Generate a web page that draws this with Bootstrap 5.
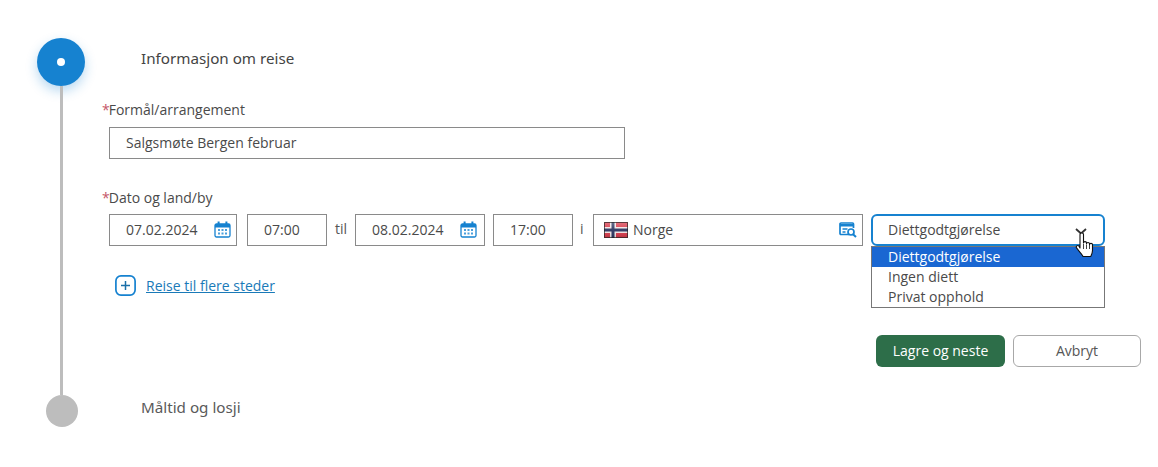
<!DOCTYPE html>
<html lang="no">
<head>
    <meta charset="UTF-8">
    <meta name="viewport" content="width=device-width, initial-scale=1.0">
    <title>Informasjon om reise</title>
    <link href="https://cdn.jsdelivr.net/npm/bootstrap@5.3.0/dist/css/bootstrap.min.css" rel="stylesheet">
    <style>
        body { font-family: "Open Sans", "Liberation Sans", sans-serif; font-size: 14px; color: #4a4a4a; background: #fff; overflow: hidden; }
        .wizard { padding: 38px 17px 0 37px; }
        .rail { width: 48px; flex: none; }
        .step-on { flex: none; width: 48px; height: 48px; border-radius: 50%; background: #1682d0; box-shadow: 0 5px 12px rgba(22,130,208,.3); }
        .step-on span { width: 8px; height: 8px; border-radius: 50%; background: #fff; }
        .rail-line { width: 3px; margin-left: 23px; background: #bdbdbd; }
        .step-off { width: 32px; height: 32px; margin-left: 9px; border-radius: 50%; background: #bdbdbd; }
        .step-title { margin: 8px 0 0 56px; height: 24px; line-height: 24px; font-size: 15.2px; color: #444; font-family: "Noto Sans", sans-serif; }
        .step-title-off { margin-top: 0; color: #5a5a5a; }
        .form-area { padding-left: 17px; }
        .field-label { display: block; margin: 30px 0 7px; height: 20px; line-height: 20px; font-size: 14px; color: #4a4a4a; }
        .field-label.next { margin-top: 29px; margin-bottom: 6px; }
        .req { color: #c4566a; margin-right: -1px; }
        .field-row { margin-left: 7px; }
        .form-control.box { height: 32px; border: 1px solid #8a8a8a; border-radius: 0; padding: 0 16px 2px; font-size: 14px; color: #4a4a4a; box-shadow: none; }
        .w-purpose { width: 516px; }
        .w-date { width: 128px; }
        .w-date2 { width: 130px; }
        .w-time { width: 80px; }
        .w-land { width: 270px; }
        .form-control.box.land { padding-left: 39px; }
        .w-diet { width: 234px; }
        .sep { color: #555; line-height: 30px; }
        .sep-til { width: 28px; padding-left: 8px; }
        .sep-i { width: 20px; padding-left: 7px; }
        .gap-wide { width: 10px; }
        .gap-narrow { width: 8px; }
        .ico-cal { position: absolute; left: 105px; top: 7px; }
        .ico-flag { position: absolute; left: 11px; top: 8px; }
        .ico-find { position: absolute; left: 246px; top: 8px; }
        .form-select.diet { height: 32px; border: 2px solid #1682d0; border-radius: 6px; padding: 0 15px 2px; font-size: 14px; color: #4a4a4a; background-image: none; box-shadow: none; }
        .dropdown-menu.diet-list { top: 32px; left: 0; width: 234px; min-width: 0; padding: 0; margin: 0; border: 1px solid #777; border-radius: 0; font-size: 14px; line-height: 20px; }
        .dropdown-menu.diet-list .dropdown-item { padding: 0 16px; height: 20px; color: #4a4a4a; }
        .dropdown-menu.diet-list .dropdown-item.active { background: #1a67d2; color: #fff; }
        .ico-hand { position: absolute; left: 204px; top: 14px; z-index: 1010; }
        .add-row { margin: 29px 0 0 13px; height: 21px; }
        .add-row a { color: #1a7ab8; font-size: 14px; margin-left: 10px; }
        .button-row { margin-top: 39px; padding-bottom: 28px; gap: 8px; }
        .btn.btn-save { width: 129px; height: 32px; padding: 0 0 2px; background: #2d6e49; border: 0; border-radius: 6px; color: #fff; font-size: 14px; font-weight: 500; }
        .btn.btn-abort { width: 128px; height: 32px; padding: 0 0 2px; background: #fff; border: 1px solid #a8a8a8; border-radius: 6px; color: #555; font-size: 14px; }
    </style>
</head>
<body>
<div class="wizard">
    <div class="d-flex">
        <div class="rail d-flex flex-column">
            <div class="step-on d-flex align-items-center justify-content-center"><span></span></div>
            <div class="rail-line flex-grow-1"></div>
        </div>
        <div class="flex-grow-1">
            <div class="step-title">Informasjon om reise</div>
            <form class="form-area">
                <label class="field-label"><span class="req">*</span>Formål/arrangement</label>
                <div class="field-row w-purpose">
                    <input type="text" class="form-control box" value="Salgsmøte Bergen februar">
                </div>

                <label class="field-label next"><span class="req">*</span>Dato og land/by</label>
                <div class="field-row d-flex">
                    <div class="w-date position-relative">
                        <input type="text" class="form-control box" value="07.02.2024">
                        <svg class="ico-cal" width="17" height="17" viewBox="0 0 17 17">
                            <rect x="1" y="3" width="15" height="13" rx="1.5" fill="#fff" stroke="#1682d0" stroke-width="1.3"/>
                            <rect x="1" y="3" width="15" height="3.5" fill="#1682d0"/>
                            <rect x="3.6" y="0.5" width="2" height="4" fill="#1682d0"/>
                            <rect x="11.4" y="0.5" width="2" height="4" fill="#1682d0"/>
                            <path d="M4 8h2v2H4zM7.5 8h2v2h-2zM11 8h2v2h-2zM4 11.5h2v2H4zM7.5 11.5h2v2h-2zM11 11.5h2v2h-2z" fill="#4a9fdc"/>
                        </svg>
                    </div>
                    <div class="gap-wide"></div>
                    <div class="w-time"><input type="text" class="form-control box" value="07:00"></div>
                    <div class="sep sep-til">til</div>
                    <div class="w-date2 position-relative">
                        <input type="text" class="form-control box" value="08.02.2024">
                        <svg class="ico-cal" width="17" height="17" viewBox="0 0 17 17">
                            <rect x="1" y="3" width="15" height="13" rx="1.5" fill="#fff" stroke="#1682d0" stroke-width="1.3"/>
                            <rect x="1" y="3" width="15" height="3.5" fill="#1682d0"/>
                            <rect x="3.6" y="0.5" width="2" height="4" fill="#1682d0"/>
                            <rect x="11.4" y="0.5" width="2" height="4" fill="#1682d0"/>
                            <path d="M4 8h2v2H4zM7.5 8h2v2h-2zM11 8h2v2h-2zM4 11.5h2v2H4zM7.5 11.5h2v2h-2zM11 11.5h2v2h-2z" fill="#4a9fdc"/>
                        </svg>
                    </div>
                    <div class="gap-narrow"></div>
                    <div class="w-time"><input type="text" class="form-control box" value="17:00"></div>
                    <div class="sep sep-i">i</div>
                    <div class="w-land position-relative">
                        <input type="text" class="form-control box land" value="Norge">
                        <svg class="ico-flag" width="24" height="16" viewBox="0 0 24 16">
                            <defs>
                                <linearGradient id="gloss" x1="0" y1="0" x2="0" y2="1">
                                    <stop offset="0" stop-color="#fff" stop-opacity=".3"/>
                                    <stop offset=".5" stop-color="#fff" stop-opacity=".05"/>
                                    <stop offset="1" stop-color="#000" stop-opacity=".15"/>
                                </linearGradient>
                            </defs>
                            <rect width="24" height="16" fill="#d8394a"/>
                            <rect x="6" width="6" height="16" fill="#f2e6e6"/>
                            <rect y="5" width="24" height="6" fill="#f2e6e6"/>
                            <rect x="7.5" width="3" height="16" fill="#2a3560"/>
                            <rect y="6.5" width="24" height="3" fill="#2a3560"/>
                            <rect width="24" height="16" fill="url(#gloss)"/>
                            <rect x=".5" y=".5" width="23" height="15" fill="none" stroke="#222" stroke-opacity=".7"/>
                        </svg>
                        <svg class="ico-find" width="18" height="16" viewBox="0 0 18 16">
                            <path d="M10 12.5H2a1 1 0 0 1-1-1V2a1 1 0 0 1 1-1h11.5a1 1 0 0 1 1 1v4" fill="none" stroke="#1682d0" stroke-width="1.7"/>
                            <rect x="1" y="2" width="13.5" height="2.5" fill="#1682d0"/>
                            <path d="M3.5 7h5M3.5 10h3" stroke="#1682d0" stroke-width="1.5"/>
                            <circle cx="12" cy="10" r="3" fill="#fff" stroke="#1682d0" stroke-width="1.7"/>
                            <path d="M14 12.2l3 2.8" stroke="#1682d0" stroke-width="2"/>
                        </svg>
                    </div>
                    <div class="gap-narrow"></div>
                    <div class="w-diet position-relative">
                        <select class="form-select diet">
                            <option selected>Diettgodtgjørelse</option>
                            <option>Ingen diett</option>
                            <option>Privat opphold</option>
                        </select>
                        <ul class="dropdown-menu show diet-list">
                            <li><a class="dropdown-item active" href="#">Diettgodtgjørelse</a></li>
                            <li><a class="dropdown-item" href="#">Ingen diett</a></li>
                            <li><a class="dropdown-item" href="#">Privat opphold</a></li>
                        </ul>
                        <svg class="ico-hand" width="22" height="30" viewBox="0 0 22 30">
                            <path d="M1 1l5 4.5L11 1" fill="none" stroke="#333" stroke-width="1.8"/>
                            <path d="M5 20V6.5c0-2.2 3.5-2.2 3.5 0V15c0-1.8 3-1.8 3 0v.8c0-1.8 3-1.8 3 0v.8c0-1.6 3-1.6 3 0v6c0 2.5-.8 4-1.800 5.900H8c-1-2.200-3-4.300-6.300-8.300-1.400-2 1-3.500 2.300-2.200z" fill="#fff" stroke="#111" stroke-width="1.1" stroke-linejoin="round"/>
                            <path d="M8.500 16v5M11.500 16.500V21M14.500 17v4" stroke="#111" stroke-width=".8"/>
                        </svg>
                    </div>
                </div>

                <div class="add-row d-flex align-items-center">
                    <svg width="21" height="21" viewBox="0 0 21 21">
                        <rect x=".9" y=".9" width="19.2" height="19.2" rx="5" fill="#fff" stroke="#1682d0" stroke-width="1.7"/>
                        <path d="M10.500 6v9M6 10.500h9" stroke="#1a6fa8" stroke-width="1.5"/>
                    </svg>
                    <a href="#">Reise til flere steder</a>
                </div>

                <div class="button-row d-flex justify-content-end">
                    <button type="button" class="btn btn-save">Lagre og neste</button>
                    <button type="button" class="btn btn-abort">Avbryt</button>
                </div>
            </form>
        </div>
    </div>
    <div class="d-flex">
        <div class="rail"><div class="step-off"></div></div>
        <div class="step-title step-title-off">Måltid og losji</div>
    </div>
</div>
<script src="https://cdn.jsdelivr.net/npm/bootstrap@5.3.0/dist/js/bootstrap.bundle.min.js"></script>
</body>
</html>
